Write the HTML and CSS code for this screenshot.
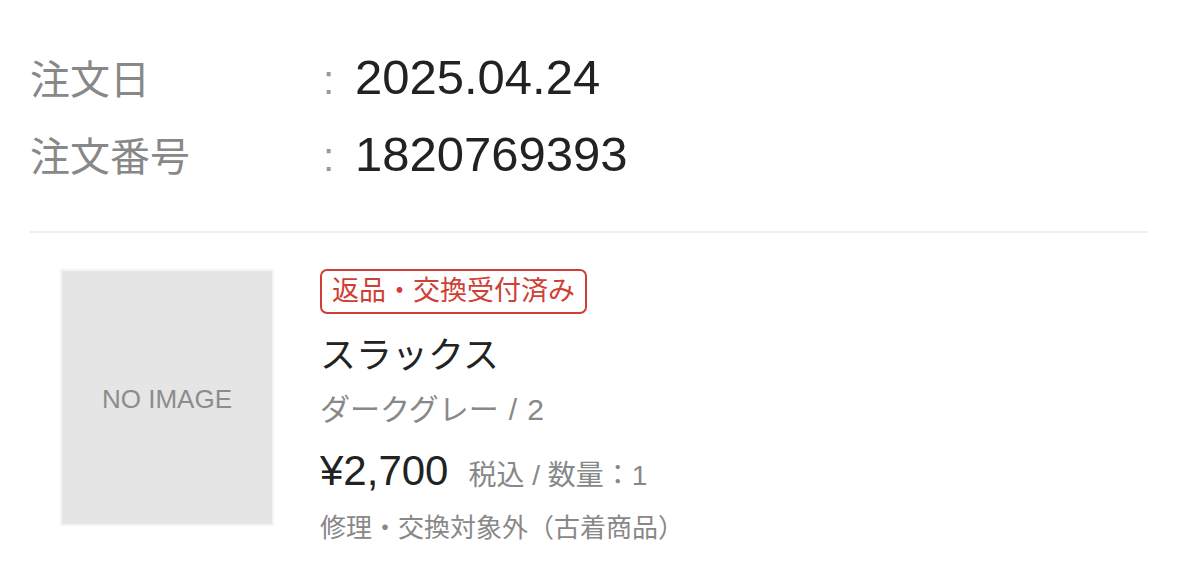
FILE: index.html
```html
<html>
    <head>
        <meta charset="utf-8">
        <meta name="viewport" content="width=device-width, initial-scale=1.0">
        <title>注文詳細</title>
        <link rel="stylesheet" href="styles.css">
    </head>
    <body>
        <div class="order-info">
            <div class="row">
                <span class="label">注文日</span>
                <span class="sep">:</span>
                <span class="value">2025.04.24</span>
            </div>
            <div class="row">
                <span class="label">注文番号</span>
                <span class="sep">:</span>
                <span class="value">1820769393</span>
            </div>
        </div>

        <hr class="divider">

        <div class="item">
            <div class="thumb">
                <div class="noimage">NO IMAGE</div>
            </div>
            <div class="detail">
                <span class="badge">返品・交換受付済み</span>
                <div class="name">スラックス</div>
                <div class="variant">ダークグレー<span class="slash">/</span>2</div>
                <div class="price-line">
                    <span class="price">¥2,700</span>
                    <span class="qty">税込 / 数量：1</span>
                </div>
                <div class="note">修理・交換対象外（古着商品）</div>
            </div>
        </div>
    </body>
</html>
```

FILE: styles.css
```css
body {
    margin: 0;
    background-color: white;
    color: #222;
    font-family: "Liberation Sans", "Noto Sans CJK JP", sans-serif;
}

.order-info {
    padding: 48px 30px 29px;
}

.row {
    display: flex;
    align-items: baseline;
    height: 77px;
}

.label {
    width: 293px;
    font-size: 40px;
    color: #888;
}

.sep {
    width: 32px;
    font-size: 40px;
    color: #999;
}

.value {
    font-size: 49px;
    color: #222;
}

.divider {
    margin: 0 30px;
    border: 0;
    border-top: 2px solid #eee;
}

.item {
    display: flex;
    gap: 46px;
    padding: 36px 0 0 60px;
}

.thumb {
    width: 214px;
    height: 257px;
    box-sizing: border-box;
    border: 2px solid #f4f4f4;
    background-color: #e5e5e5;
    display: flex;
    align-items: center;
    justify-content: center;
}

.noimage {
    font-size: 26px;
    color: #8c8c8c;
    margin-top: 4px;
}

.detail {
    display: flex;
    flex-direction: column;
    align-items: flex-start;
}

.badge {
    border: 2px solid #cf3f35;
    border-radius: 7px;
    color: #cf3f35;
    font-size: 27px;
    padding: 3px 10px;
    line-height: 35px;
}

.name {
    font-size: 36px;
    margin-top: 17px;
    line-height: 50px;
}

.variant {
    font-size: 30px;
    color: #888;
    line-height: 58px;
}

.slash {
    margin: 0 10px;
}

.price-line {
    display: flex;
    align-items: baseline;
    gap: 20px;
    line-height: 64px;
}

.price {
    font-size: 42px;
}

.qty {
    font-size: 28px;
    color: #888;
}

.note {
    font-size: 26px;
    color: #888;
    line-height: 40px;
}
```
